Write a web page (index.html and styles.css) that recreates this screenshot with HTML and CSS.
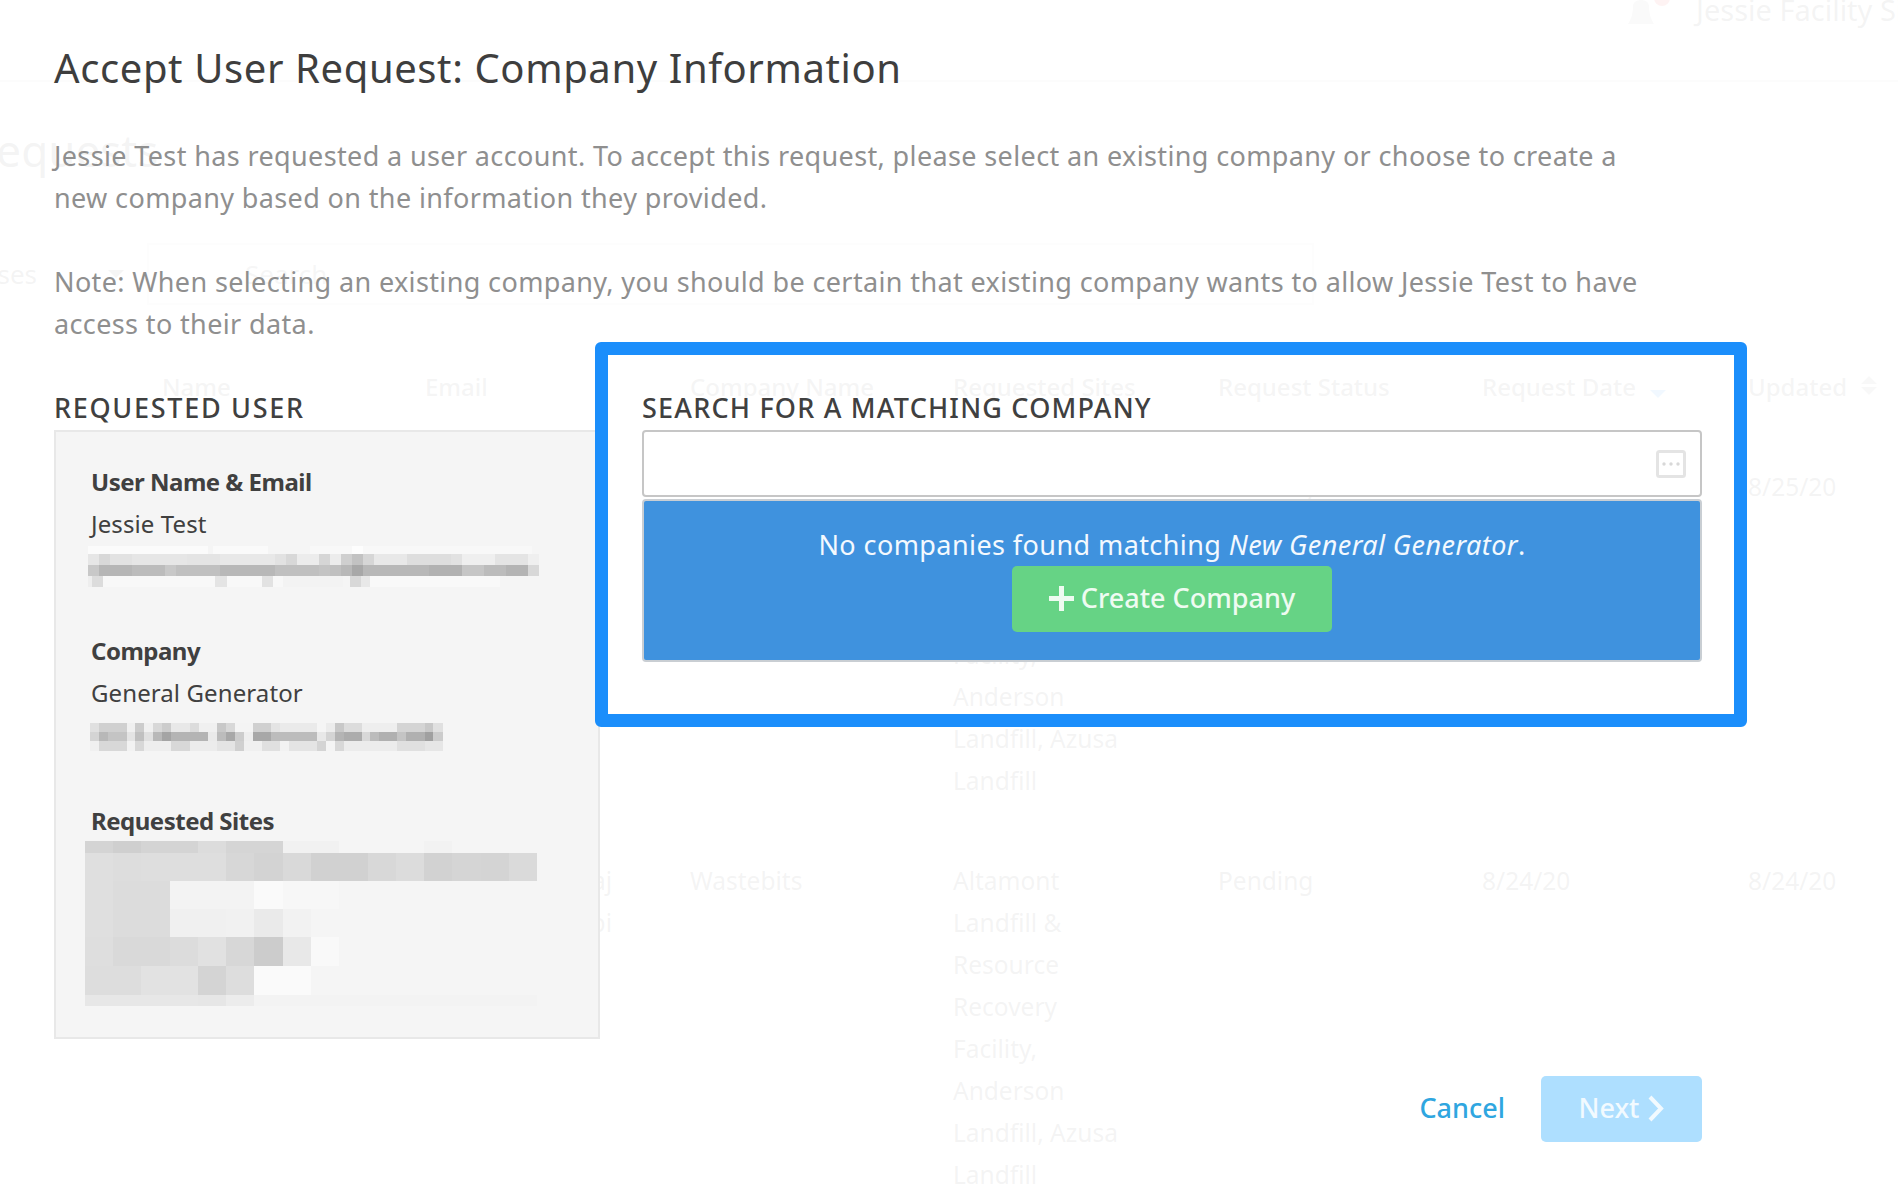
FILE: index.html
```html
<!DOCTYPE html>
<html lang="en">
<head>
<meta charset="utf-8">
<title>Accept User Request</title>
<link rel="stylesheet" href="styles.css">
</head>
<body>
<div class="page">
  <header class="topbar">
    <svg class="bell" width="44" height="26" viewBox="0 0 44 26">
      <path d="M0 24 C4 18 5 12 5 6 C5 -2 21 -2 21 6 C21 12 22 18 26 24 Z" fill="#a8a8a8"/>
      <circle cx="34" cy="-2" r="8" fill="#e8353b"/>
    </svg>
    <span class="account">Jessie Facility Site Manager</span>
  </header>
  <h2 class="page-title">Requests</h2>
  <div class="filters">
    <span class="status">All Statuses</span>
    <span class="status-caret"></span>
    <div class="searchbox">Search</div>
  </div>
  <div class="table">
    <div class="table-row head">
      <span>Name</span><span>Email</span><span>Company Name</span><span>Requested Sites</span><span>Request Status</span>
      <span>Request Date <i class="sort-down"></i></span>
      <span>Updated <i class="sort-both"></i></span>
    </div>
    <div class="table-row">
      <span>Jessie Test</span><span>jessie@test</span><span>General Generator</span>
      <span class="sites">Altamont Landfill &amp; Resource Recovery Facility, Anderson Landfill, Azusa Landfill</span>
      <span>Pending</span><span>8/25/20</span><span>8/25/20</span>
    </div>
    <div class="table-row">
      <span>Jessie Test</span><span class="email-tail">jessie.testmaj<br>user@wastepi</span><span>Wastebits</span>
      <span class="sites">Altamont Landfill &amp; Resource Recovery Facility, Anderson Landfill, Azusa Landfill</span>
      <span>Pending</span><span>8/24/20</span><span>8/24/20</span>
    </div>
  </div>
</div>

<div class="modal">
  <h1 class="modal-title">Accept User Request: Company Information</h1>
  <p class="intro">Jessie Test has requested a user account. To accept this request, please select an existing company or choose to create a new company based on the information they provided.</p>
  <p class="intro note">Note: When selecting an existing company, you should be certain that existing company wants to allow Jessie Test to have access to their data.</p>

  <div class="columns">
    <section class="user-col">
      <h3 class="section-title section-title-user">REQUESTED USER</h3>
      <div class="user-panel">
        <div class="label">User Name &amp; Email</div>
        <div class="value">Jessie Test</div>
        <svg class="mosaic m-email" width="454" height="41" viewBox="0 0 454 41" shape-rendering="crispEdges">
          <rect x="0" y="0" width="120" height="8" fill="#fbfbfb"/>
          <rect x="125" y="0" width="55" height="8" fill="#fafafa"/>
          <rect x="222" y="0" width="222" height="8" fill="#f8f8f8"/>
          <rect x="264" y="0" width="11" height="8" fill="#fdfdfd"/>
          <rect x="0" y="8" width="11" height="11" fill="#e6e6e6"/>
          <rect x="11" y="8" width="11" height="11" fill="#d8d8d8"/>
          <rect x="22" y="8" width="22" height="11" fill="#e2e2e2"/>
          <rect x="44" y="8" width="55" height="11" fill="#e6e6e6"/>
          <rect x="99" y="8" width="33" height="11" fill="#e4e4e4"/>
          <rect x="132" y="8" width="55" height="11" fill="#e8e8e8"/>
          <rect x="187" y="8" width="11" height="11" fill="#e2e2e2"/>
          <rect x="198" y="8" width="11" height="11" fill="#d8d8d8"/>
          <rect x="209" y="8" width="22" height="11" fill="#ececec"/>
          <rect x="231" y="8" width="11" height="11" fill="#d6d6d6"/>
          <rect x="242" y="8" width="11" height="11" fill="#ececec"/>
          <rect x="253" y="8" width="11" height="11" fill="#cfcfcf"/>
          <rect x="264" y="8" width="11" height="11" fill="#c2c2c2"/>
          <rect x="275" y="8" width="11" height="11" fill="#d6d6d6"/>
          <rect x="286" y="8" width="33" height="11" fill="#e8e8e8"/>
          <rect x="319" y="8" width="44" height="11" fill="#dedede"/>
          <rect x="363" y="8" width="11" height="11" fill="#e2e2e2"/>
          <rect x="374" y="8" width="33" height="11" fill="#efefef"/>
          <rect x="407" y="8" width="33" height="11" fill="#e4e4e4"/>
          <rect x="440" y="8" width="11" height="11" fill="#efefef"/>
          <rect x="0" y="19" width="11" height="11" fill="#c8c8c8"/>
          <rect x="11" y="19" width="33" height="11" fill="#b6b6b6"/>
          <rect x="44" y="19" width="33" height="11" fill="#bcbcbc"/>
          <rect x="77" y="19" width="11" height="11" fill="#c8c8c8"/>
          <rect x="88" y="19" width="44" height="11" fill="#c0c0c0"/>
          <rect x="132" y="19" width="55" height="11" fill="#b8b8b8"/>
          <rect x="187" y="19" width="44" height="11" fill="#c0c0c0"/>
          <rect x="231" y="19" width="11" height="11" fill="#c4c4c4"/>
          <rect x="242" y="19" width="11" height="11" fill="#c0c0c0"/>
          <rect x="253" y="19" width="11" height="11" fill="#b8b8b8"/>
          <rect x="264" y="19" width="11" height="11" fill="#a8a8a8"/>
          <rect x="275" y="19" width="66" height="11" fill="#b8b8b8"/>
          <rect x="341" y="19" width="33" height="11" fill="#b2b2b2"/>
          <rect x="374" y="19" width="22" height="11" fill="#c6c6c6"/>
          <rect x="396" y="19" width="22" height="11" fill="#bcbcbc"/>
          <rect x="418" y="19" width="22" height="11" fill="#b4b4b4"/>
          <rect x="440" y="19" width="11" height="11" fill="#d8d8d8"/>
          <rect x="0" y="30" width="4" height="11" fill="#eeeeee"/>
          <rect x="4" y="30" width="11" height="11" fill="#dcdcdc"/>
          <rect x="15" y="30" width="180" height="11" fill="#f8f8f8"/>
          <rect x="127" y="30" width="12" height="11" fill="#e4e4e4"/>
          <rect x="174" y="30" width="11" height="11" fill="#e2e2e2"/>
          <rect x="195" y="30" width="60" height="11" fill="#f3f3f3"/>
          <rect x="262" y="30" width="11" height="11" fill="#d8d8d8"/>
          <rect x="273" y="30" width="9" height="11" fill="#e8e8e8"/>
          <rect x="282" y="30" width="130" height="11" fill="#f9f9f9"/>
        </svg>
        <div class="label company">Company</div>
        <div class="value">General Generator</div>
        <svg class="mosaic m-addr" width="354" height="28" viewBox="0 0 354 28" shape-rendering="crispEdges">
          <g>
            <rect x="0" y="0" width="9" height="9" fill="#e0e0e0"/><rect x="9" y="0" width="28" height="9" fill="#d0d0d0"/><rect x="37" y="0" width="8" height="9" fill="#f0f0f0"/><rect x="45" y="0" width="9" height="9" fill="#cccccc"/><rect x="54" y="0" width="9" height="9" fill="#f0f0f0"/><rect x="63" y="0" width="9" height="9" fill="#d8d8d8"/><rect x="72" y="0" width="9" height="9" fill="#cccccc"/><rect x="81" y="0" width="19" height="9" fill="#e8e8e8"/><rect x="100" y="0" width="9" height="9" fill="#dcdcdc"/><rect x="109" y="0" width="18" height="9" fill="#f0f0f0"/><rect x="127" y="0" width="9" height="9" fill="#c8c8c8"/><rect x="136" y="0" width="9" height="9" fill="#d8d8d8"/><rect x="145" y="0" width="18" height="9" fill="#f4f4f4"/><rect x="163" y="0" width="18" height="9" fill="#d0d0d0"/><rect x="181" y="0" width="9" height="9" fill="#e4e4e4"/><rect x="190" y="0" width="37" height="9" fill="#eaeaea"/><rect x="227" y="0" width="9" height="9" fill="#f5f5f5"/><rect x="236" y="0" width="9" height="9" fill="#ececec"/><rect x="245" y="0" width="9" height="9" fill="#c8c8c8"/><rect x="254" y="0" width="18" height="9" fill="#dcdcdc"/><rect x="272" y="0" width="35" height="9" fill="#eeeeee"/><rect x="307" y="0" width="28" height="9" fill="#d4d4d4"/><rect x="335" y="0" width="8" height="9" fill="#c8c8c8"/><rect x="343" y="0" width="10" height="9" fill="#e0e0e0"/>
          </g>
          <g>
            <rect x="0" y="9" width="9" height="9" fill="#d4d4d4"/><rect x="9" y="9" width="9" height="9" fill="#b8b8b8"/><rect x="18" y="9" width="19" height="9" fill="#c4c4c4"/><rect x="37" y="9" width="8" height="9" fill="#e4e4e4"/><rect x="45" y="9" width="9" height="9" fill="#c0c0c0"/><rect x="54" y="9" width="9" height="9" fill="#e0e0e0"/><rect x="63" y="9" width="9" height="9" fill="#b8b8b8"/><rect x="72" y="9" width="9" height="9" fill="#a4a4a4"/><rect x="81" y="9" width="37" height="9" fill="#b4b4b4"/><rect x="118" y="9" width="9" height="9" fill="#eaeaea"/><rect x="127" y="9" width="9" height="9" fill="#bcbcbc"/><rect x="136" y="9" width="9" height="9" fill="#a8a8a8"/><rect x="145" y="9" width="9" height="9" fill="#cccccc"/><rect x="154" y="9" width="9" height="9" fill="#eeeeee"/><rect x="163" y="9" width="18" height="9" fill="#a8a8a8"/><rect x="181" y="9" width="46" height="9" fill="#bcbcbc"/><rect x="227" y="9" width="9" height="9" fill="#e8e8e8"/><rect x="236" y="9" width="9" height="9" fill="#d4d4d4"/><rect x="245" y="9" width="9" height="9" fill="#b4b4b4"/><rect x="254" y="9" width="18" height="9" fill="#acacac"/><rect x="272" y="9" width="8" height="9" fill="#d8d8d8"/><rect x="280" y="9" width="9" height="9" fill="#bcbcbc"/><rect x="289" y="9" width="18" height="9" fill="#b0b0b0"/><rect x="307" y="9" width="9" height="9" fill="#c4c4c4"/><rect x="316" y="9" width="19" height="9" fill="#b0b0b0"/><rect x="335" y="9" width="8" height="9" fill="#a0a0a0"/><rect x="343" y="9" width="10" height="9" fill="#cccccc"/>
          </g>
          <g>
            <rect x="0" y="18" width="9" height="10" fill="#f0f0f0"/><rect x="9" y="18" width="28" height="10" fill="#d8d8d8"/><rect x="37" y="18" width="8" height="10" fill="#f2f2f2"/><rect x="45" y="18" width="9" height="10" fill="#d8d8d8"/><rect x="54" y="18" width="27" height="10" fill="#eeeeee"/><rect x="81" y="18" width="19" height="10" fill="#d8d8d8"/><rect x="100" y="18" width="27" height="10" fill="#ececec"/><rect x="127" y="18" width="18" height="10" fill="#e4e4e4"/><rect x="145" y="18" width="9" height="10" fill="#d0d0d0"/><rect x="154" y="18" width="18" height="10" fill="#f0f0f0"/><rect x="172" y="18" width="18" height="10" fill="#e0e0e0"/><rect x="190" y="18" width="9" height="10" fill="#f2f2f2"/><rect x="199" y="18" width="28" height="10" fill="#e4e4e4"/><rect x="227" y="18" width="9" height="10" fill="#d4d4d4"/><rect x="236" y="18" width="9" height="10" fill="#f4f4f4"/><rect x="245" y="18" width="9" height="10" fill="#d8d8d8"/><rect x="254" y="18" width="53" height="10" fill="#ececec"/><rect x="307" y="18" width="28" height="10" fill="#e0e0e0"/><rect x="335" y="18" width="18" height="10" fill="#e6e6e6"/>
          </g>
        </svg>
        <div class="label sites-label">Requested Sites</div>
        <svg class="mosaic m-sites" width="453" height="165" viewBox="0 0 453 165" shape-rendering="crispEdges">
          <g>
            <rect x="0" y="0" width="28" height="12" fill="#d4d4d4"/><rect x="28" y="0" width="28" height="12" fill="#cfcfcf"/><rect x="56" y="0" width="57" height="12" fill="#d4d4d4"/><rect x="113" y="0" width="28" height="12" fill="#dcdcdc"/><rect x="141" y="0" width="57" height="12" fill="#d5d5d5"/><rect x="198" y="0" width="56" height="12" fill="#f1f1f1"/><rect x="339" y="0" width="28" height="12" fill="#f2f2f2"/>
          </g>
          <g>
            <rect x="0" y="12" width="28" height="28" fill="#dfdfdf"/><rect x="28" y="12" width="28" height="28" fill="#dddddd"/><rect x="56" y="12" width="85" height="28" fill="#dedede"/><rect x="141" y="12" width="28" height="28" fill="#d7d7d7"/><rect x="169" y="12" width="29" height="28" fill="#d3d3d3"/><rect x="198" y="12" width="28" height="28" fill="#d9d9d9"/><rect x="226" y="12" width="57" height="28" fill="#d1d1d1"/><rect x="283" y="12" width="28" height="28" fill="#d8d8d8"/><rect x="311" y="12" width="28" height="28" fill="#dcdcdc"/><rect x="339" y="12" width="28" height="28" fill="#d2d2d2"/><rect x="367" y="12" width="29" height="28" fill="#d5d5d5"/><rect x="396" y="12" width="28" height="28" fill="#d4d4d4"/><rect x="424" y="12" width="28" height="28" fill="#dadada"/>
          </g>
          <g>
            <rect x="0" y="40" width="28" height="56" fill="#dfdfdf"/><rect x="28" y="40" width="57" height="56" fill="#dcdcdc"/><rect x="85" y="40" width="84" height="28" fill="#f3f3f3"/><rect x="169" y="40" width="29" height="28" fill="#fafafa"/><rect x="198" y="40" width="56" height="28" fill="#f7f7f7"/><rect x="85" y="68" width="56" height="28" fill="#f0f0f0"/><rect x="141" y="68" width="28" height="28" fill="#f1f1f1"/><rect x="169" y="68" width="29" height="28" fill="#eaeaea"/><rect x="198" y="68" width="28" height="28" fill="#f2f2f2"/>
          </g>
          <g>
            <rect x="0" y="96" width="28" height="29" fill="#dedede"/><rect x="28" y="96" width="57" height="29" fill="#d9d9d9"/><rect x="85" y="96" width="28" height="29" fill="#dcdcdc"/><rect x="113" y="96" width="28" height="29" fill="#e1e1e1"/><rect x="141" y="96" width="28" height="29" fill="#d7d7d7"/><rect x="169" y="96" width="29" height="29" fill="#cccccc"/><rect x="198" y="96" width="28" height="29" fill="#e8e8e8"/><rect x="226" y="96" width="28" height="29" fill="#f9f9f9"/>
          </g>
          <g>
            <rect x="0" y="125" width="56" height="29" fill="#dddddd"/><rect x="56" y="125" width="57" height="29" fill="#e2e2e2"/><rect x="113" y="125" width="28" height="29" fill="#d4d4d4"/><rect x="141" y="125" width="28" height="29" fill="#dddddd"/><rect x="169" y="125" width="57" height="29" fill="#fafafa"/>
          </g>
          <g>
            <rect x="0" y="154" width="113" height="11" fill="#e7e7e7"/><rect x="113" y="154" width="28" height="11" fill="#e6e6e6"/><rect x="141" y="154" width="28" height="11" fill="#ececec"/><rect x="169" y="154" width="283" height="11" fill="#f3f3f3"/>
          </g>
        </svg>
      </div>
    </section>

    <section class="match-frame">
      <h3 class="section-title">SEARCH FOR A MATCHING COMPANY</h3>
      <div class="search-input">
        <svg width="30" height="28" viewBox="0 0 30 28">
          <rect x="1.5" y="1.5" width="27" height="25" rx="2" fill="none" stroke="#e4e4e4" stroke-width="3"/>
          <circle cx="8" cy="14" r="1.7" fill="#d8d8d8"/><circle cx="15" cy="14" r="1.7" fill="#d8d8d8"/><circle cx="22" cy="14" r="1.7" fill="#d8d8d8"/>
        </svg>
      </div>
      <div class="no-results">
        <div class="no-results-text">No companies found matching <em>New General Generator</em>.</div>
        <button class="btn btn-create" type="button">
          <svg width="25" height="25" viewBox="0 0 25 25"><path d="M10 0h5v10h10v5H15v10h-5V15H0v-5h10z" fill="#eefbf1"/></svg>
          Create Company
        </button>
      </div>
    </section>
  </div>

  <footer class="modal-actions">
    <a class="cancel">Cancel</a>
    <button class="btn btn-next" type="button">Next
      <svg width="17" height="27" viewBox="0 0 17 27"><path d="M3 2 L14 13.5 L3 25" fill="none" stroke="#f2faff" stroke-width="4"/></svg>
    </button>
  </footer>
</div>
</body>
</html>
```
FILE: styles.css
```css
* { box-sizing: border-box; }
html, body { margin: 0; padding: 0; }
body {
  position: relative;
  width: 1898px;
  height: 1194px;
  overflow: hidden;
  background: #fff;
  font-family: "Noto Sans", "Open Sans", sans-serif;
  font-size: 27px;
  line-height: 42px;
  color: #444;
}

/* Page behind the dialog */
.page { width: 2100px; margin-left: -27px; }
.topbar {
  height: 82px;
  border-bottom: 2px solid #ccc;
  margin-left: 27px;
  width: 1898px;
  display: flex;
  align-items: flex-start;
  padding-left: 1628px;
  gap: 24px;
}
.bell { flex: none; }
.account { margin-top: -11px; font-size: 29px; white-space: nowrap; }
.page-title { margin: 47px 0 0 -4px; font-size: 44px; line-height: 42px; font-weight: 400; }
.filters { display: flex; align-items: center; margin-top: 72px; height: 62px; }
.status { width: 64px; font-size: 26px; white-space: nowrap; direction: rtl; }
.status-caret {
  margin-left: 71px;
  border-left: 8px solid transparent;
  border-right: 8px solid transparent;
  border-top: 8px solid #555;
}
.searchbox {
  margin-left: 23px;
  width: 1167px;
  height: 62px;
  padding: 8px 0 0 96px;
  border: 2px solid #ddd;
  font-size: 26px;
  color: #666;
}
.table { margin-top: 61px; padding-left: 189px; font-size: 24.5px; }
.table-row {
  display: grid;
  grid-template-columns: 263px 265px 263px 265px 264px 266px 300px;
  padding: 29px 0;
}
.table-row span { display: block; padding-right: 40px; }
.table-row.head { padding-top: 0; color: #555; font-weight: 500; font-size: 24px; }
.table-row span.sites { padding-right: 97px; }
.table-row span.email-tail { padding-right: 78px; text-align: right; white-space: nowrap; }
.sort-down, .sort-both { display: inline-block; position: relative; width: 16px; height: 16px; margin-left: 8px; }
.sort-down::after {
  content: ""; position: absolute; left: 0; top: 10px;
  border-left: 8px solid transparent; border-right: 8px solid transparent; border-top: 8px solid #1b8efb;
}
.sort-both::before {
  content: ""; position: absolute; left: 0; top: -4px;
  border-left: 8px solid transparent; border-right: 8px solid transparent; border-bottom: 8px solid #888;
}
.sort-both::after {
  content: ""; position: absolute; left: 0; top: 7px;
  border-left: 8px solid transparent; border-right: 8px solid transparent; border-top: 8px solid #888;
}

/* Dialog */
.modal {
  position: absolute;
  inset: 0;
  padding: 47px 196px 0 54px;
  background: rgba(255, 255, 255, 0.94);
}
.modal-title {
  margin: 0;
  font-size: 40px;
  line-height: 42px;
  font-weight: 400;
  letter-spacing: 0.6px;
  color: #3e3e3e;
}
.intro { max-width: 1610px; margin: 46px 0 0; color: #8f8f8f; letter-spacing: 0.37px; }
.intro.note { margin-top: 42px; }

.columns { display: flex; align-items: flex-start; }
.user-col { width: 546px; flex: none; margin-top: 42px; }
.section-title {
  margin: 0;
  font-size: 27px;
  line-height: 42px;
  font-weight: 500;
  letter-spacing: 1.2px;
  color: #404040;
}
.section-title-user { letter-spacing: 1.7px; }
.user-panel {
  height: 609px;
  margin-top: 1px;
  padding: 29px 0 0 35px;
  background: #f5f5f5;
  border: 2px solid #e8e8e8;
}
.label { font-weight: 700; font-size: 24px; letter-spacing: -0.5px; color: #404040; }
.value { font-size: 24px; letter-spacing: 0.1px; color: #404040; }
.mosaic { display: block; }
.m-email { margin: 1px 0 0 -3px; }
.company { margin-top: 43px; }
.m-addr { margin: 9px 0 0 -1px; }
.sites-label { margin-top: 49px; }
.m-sites { margin: -1px 0 0 -6px; }

.match-frame {
  flex: none;
  width: 1152px;
  height: 385px;
  margin: -3px 0 0 -5px;
  padding: 32px 32px 0 34px;
  border: 13px solid #1b8efb;
  border-radius: 6px;
}
.search-input {
  height: 67px;
  margin-top: 1px;
  padding-right: 14px;
  background: #fff;
  border: 2px solid #c6c6c6;
  border-radius: 4px;
  display: flex;
  align-items: center;
  justify-content: flex-end;
}
.no-results {
  height: 163px;
  margin-top: 2px;
  padding-top: 23px;
  background: #3f92de;
  border: 2px solid #c9ced3;
  border-radius: 4px;
  display: flex;
  flex-direction: column;
  align-items: center;
  color: #f3f9fe;
}
.no-results-text { letter-spacing: 0.42px; }
.btn {
  font: inherit;
  font-weight: 500;
  border: 0;
  border-radius: 5px;
  display: flex;
  align-items: center;
  justify-content: center;
  height: 66px;
  padding: 0 0 2px;
}
.btn-create {
  width: 320px;
  gap: 7px;
  background: #66d385;
  color: #eefbf1;
}
.modal-actions {
  display: flex;
  justify-content: flex-end;
  align-items: center;
  gap: 36px;
  margin-top: 37px;
}
.cancel { color: #2fa6e0; font-weight: 500; padding-bottom: 2px; }
.btn-next {
  width: 161px;
  gap: 8px;
  background: #aedfff;
  color: #f2faff;
}
```
